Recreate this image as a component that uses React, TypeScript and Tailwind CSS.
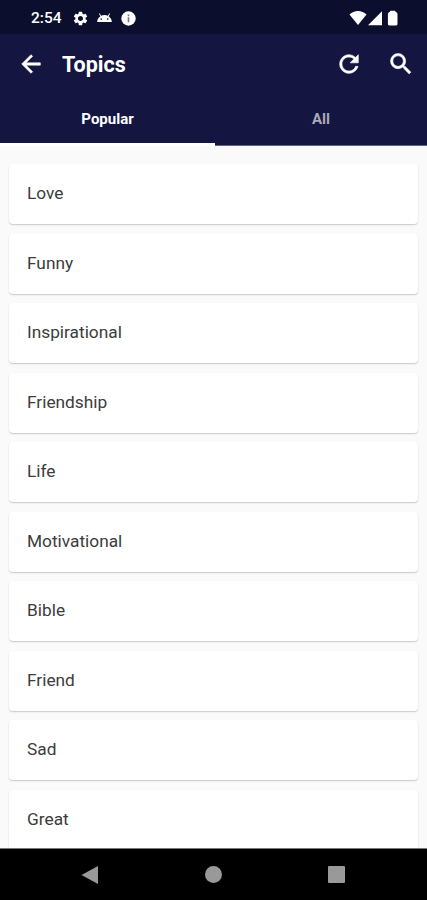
import { useState } from "react";
import { MdArrowBack, MdRefresh, MdSearch, MdSettings } from "react-icons/md";

const topics = [
  "Love",
  "Funny",
  "Inspirational",
  "Friendship",
  "Life",
  "Motivational",
  "Bible",
  "Friend",
  "Sad",
  "Great",
];

const StatusBar = () => {
  return (
    <div className="flex h-[34px] shrink-0 items-center justify-between bg-[#0b0e2d] pt-[2px] pr-[29px] pl-[31px] text-white">
      <div className="flex items-center">
        <span className="w-[41px] pt-[2px] text-[15.5px] leading-none font-medium">2:54</span>
        <MdSettings size={17} />
        <svg className="ml-[8px]" width="15" height="10" viewBox="0 0 15 10" fill="currentColor">
          <path
            fillRule="evenodd"
            d="M2.5.3 4.2 2.7A7 7 0 0 1 7.5 1.9a7 7 0 0 1 3.3.8L12.5.3l.6.4-1.5 2.5A7 7 0 0 1 14.8 9H.2A7 7 0 0 1 3.4 3.2L1.9.7zM4.2 5.3a.8.8 0 1 0 0 1.6.8.8 0 0 0 0-1.6zm6.6 0a.8.8 0 1 0 0 1.6.8.8 0 0 0 0-1.6z"
          />
        </svg>
        <svg className="ml-[9px]" width="15" height="15" viewBox="0 0 15 15">
          <circle cx="7.5" cy="7.5" r="7.2" fill="#fff" />
          <path d="M6.7 3.6h1.6v1.6H6.7zM6.7 6.3h1.6v5H6.7z" fill="#73758a" />
        </svg>
      </div>
      <svg width="49" height="16" viewBox="0 0 49 16" fill="currentColor">
        <path d="M.5 4.6A13 13 0 0 1 9 1a13 13 0 0 1 8.5 3.6L9 15z" />
        <path d="M33 1.2V15.2H19z" />
        <path d="M41.5.8h4.4l1 1.3a2 2 0 0 1 1.6 1.9v10a1.4 1.4 0 0 1-1.4 1.4h-6.8a1.4 1.4 0 0 1-1.4-1.4V4a2 2 0 0 1 1.6-1.9z" />
      </svg>
    </div>
  );
};

const NavigationBar = () => {
  return (
    <div className="flex h-[52px] shrink-0 items-center justify-between border-t border-[#777] bg-black pr-[82px] pl-[81px]">
      <svg width="18" height="20" viewBox="0 0 18 20" fill="#999">
        <path d="M17 1v18L.5 10z" />
      </svg>
      <div className="size-[17px] rounded-full bg-[#999]" />
      <div className="size-[17px] rounded-[1px] bg-[#999]" />
    </div>
  );
};

const App = () => {
  const [tab, setTab] = useState("popular");

  return (
    <main className="flex h-[900px] w-[427px] flex-col overflow-hidden bg-[#fafafa] font-['Roboto',sans-serif]">
      <StatusBar />
      <header className="h-[112px] shrink-0 bg-[#141541] text-white">
        <div className="flex h-[60px] items-center pr-[12px] pl-[17px]">
          <MdArrowBack size={28} className="[&>path:last-child]:[stroke-width:0.5]" />
          <h1 className="ml-[17px] flex-1 pt-[2px] text-[21.5px] leading-none font-bold">Topics</h1>
          <MdRefresh size={28} className="[&>path:last-child]:[stroke-width:0.5]" />
          <MdSearch size={28} className="ml-[24px] [&>path:last-child]:[stroke-width:0.5]" />
        </div>
        <div className="flex h-[52px] text-[15px] font-bold">
          <button
            onClick={() => setTab("popular")}
            className={`${
              tab === "popular" ? "border-b-[3px] border-white" : "border-b border-[#62637c] text-[#a9aabb]"
            } w-[215px] pt-[2px]`}
          >
            Popular
          </button>
          <button
            onClick={() => setTab("all")}
            className={`${
              tab === "all" ? "border-b-[3px] border-white" : "border-b border-[#62637c] text-[#a9aabb]"
            } flex-1`}
          >
            All
          </button>
        </div>
      </header>
      <div className="flex min-h-0 flex-1 flex-col gap-[9.5px] overflow-hidden px-[9px] pt-[18px]">
        {topics.map((topic) => (
          <div
            key={topic}
            className="flex h-[60px] shrink-0 items-center rounded-[4px] bg-white px-[18px] text-[17.3px] text-[#3c3c3c] shadow-[0_1px_1.5px_rgba(0,0,0,0.2)]"
          >
            {topic}
          </div>
        ))}
      </div>
      <NavigationBar />
    </main>
  );
};

export default App;
